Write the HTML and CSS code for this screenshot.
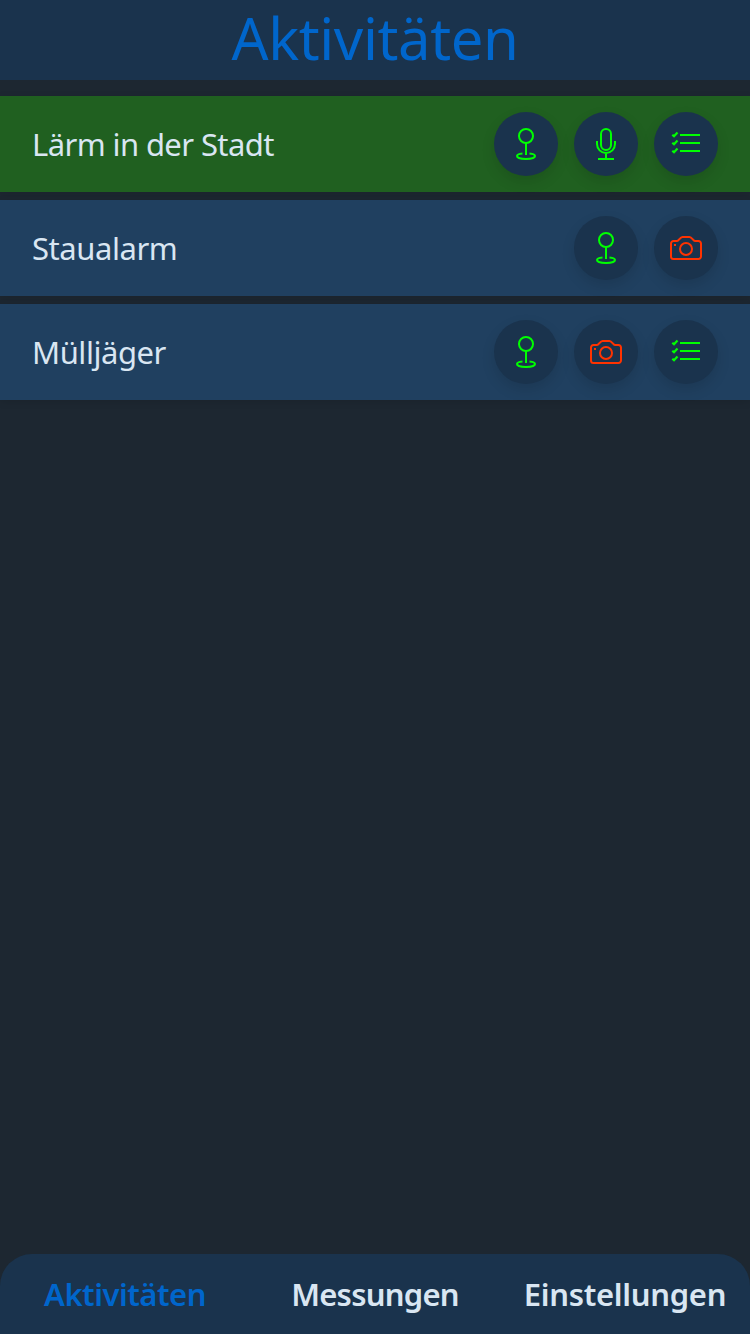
FILE: index.html
```html
<!DOCTYPE html>
<html lang="de">
<head>
<meta charset="utf-8">
<title>Aktivitäten</title>
<link rel="stylesheet" href="styles.css">
</head>
<body>
<svg class="sprite" aria-hidden="true">
  <symbol id="pin" viewBox="0 0 32 32"><circle cx="16" cy="8" r="7"/><path d="M16 15v12M12.500 25.500C9 25.800 7 26.800 7 28c0 1.800 4 3 9 3s9-1.200 9-3c0-1.200-2-2.200-5.500-2.500"/></symbol>
  <symbol id="mic" viewBox="0 0 32 32"><rect x="11" y="1" width="10" height="21" rx="5"/><path d="M7 13v3a9 9 0 0 0 18 0v-3M16 25v6M8 31h16"/></symbol>
  <symbol id="list" viewBox="0 0 32 32"><path d="M10 7h20M10 15h20M10 23h20M2.300 6.800l1.700 1.500 3.500-3.800M2.300 14.800l1.700 1.500 3.500-3.800M2.300 22.800l1.700 1.500 3.500-3.800"/></symbol>
  <symbol id="camera" viewBox="0 0 32 32"><path d="M3.500 9H7c2 0 3-4 5.500-4h7C22 5 23 9 25 9h3.500A2.500 2.500 0 0 1 31 11.500v13a2.500 2.500 0 0 1-2.500 2.500h-25A2.500 2.500 0 0 1 1 24.500v-13A2.500 2.500 0 0 1 3.500 9z"/><circle cx="16" cy="17" r="6"/><path d="M4 13h2"/></symbol>
</svg>
<div class="app">
  <header class="header"><h1 class="title">Aktivitäten</h1></header>
  <main class="list">
    <div class="row active">
      <span class="name noise">Lärm in der Stadt</span>
      <span class="badge"><svg><use href="#pin"/></svg></span>
      <span class="badge"><svg><use href="#mic"/></svg></span>
      <span class="badge"><svg class="bold"><use href="#list"/></svg></span>
    </div>
    <div class="row">
      <span class="name">Staualarm</span>
      <span class="badge"><svg><use href="#pin"/></svg></span>
      <span class="badge off"><svg><use href="#camera"/></svg></span>
    </div>
    <div class="row">
      <span class="name">Mülljäger</span>
      <span class="badge"><svg><use href="#pin"/></svg></span>
      <span class="badge off"><svg><use href="#camera"/></svg></span>
      <span class="badge"><svg class="bold"><use href="#list"/></svg></span>
    </div>
  </main>
  <nav class="tabs">
    <a class="tab current"><span>Aktivitäten</span></a>
    <a class="tab messages"><span>Messungen</span></a>
    <a class="tab settings"><span>Einstellungen</span></a>
  </nav>
</div>
</body>
</html>
```
FILE: styles.css
```css
* { box-sizing: border-box; }
body { margin: 0; background: #1d2731; color: #d9e6f2; font-family: "Noto Sans", "Open Sans", sans-serif; }
.sprite { position: absolute; width: 0; height: 0; }
.app { display: flex; flex-direction: column; height: 1334px; }
.header { height: 80px; background: #1a334d; display: flex; justify-content: center; }
.title { margin: 0; font-size: 58px; line-height: 75px; height: 80px; font-weight: 400; letter-spacing: -.4px; color: #0066cc; white-space: nowrap; }
.list { flex: 1; padding-top: 16px; display: flex; flex-direction: column; gap: 8px; }
.row { height: 96px; padding: 0 32px; display: flex; align-items: center; gap: 16px; background: #204060; box-shadow: 0 2px 8px rgba(0, 0, 0, .1); }
.row.active { background: #206020; }
.name { flex: 1; font-size: 31px; line-height: 40px; letter-spacing: -.45px; white-space: nowrap; }
.name.noise { letter-spacing: -.6px; }
.badge { width: 64px; height: 64px; border-radius: 50%; background: #1a334d; display: flex; align-items: center; justify-content: center; box-shadow: 0 6px 14px rgba(0, 0, 0, .12); color: #00ff00; }
.badge.off { color: #ff3300; }
.badge svg { width: 32px; height: 32px; fill: none; stroke: currentColor; stroke-width: 2; }
.badge .bold { stroke-width: 2.2; }
.tabs { height: 80px; display: grid; grid-template-columns: repeat(3, 250px); background: #1a334d; border-radius: 32px 32px 0 0; }
.tab { display: flex; justify-content: center; font-size: 31px; line-height: 81px; height: 80px; font-weight: 600; letter-spacing: -.5px; white-space: nowrap; }
.tab.current { color: #0066cc; }
.tab.messages { letter-spacing: -.75px; }
.tab.settings { letter-spacing: -.3px; }
```
